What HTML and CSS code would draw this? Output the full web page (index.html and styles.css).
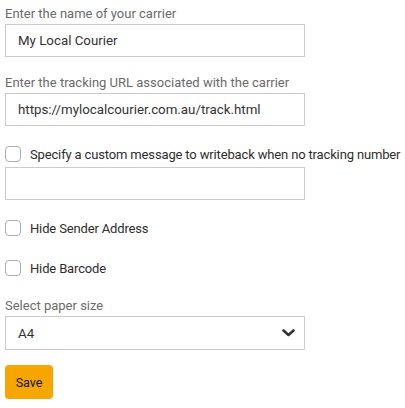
FILE: index.html
```html
<!DOCTYPE html>
<html>
<head>
<meta charset="utf-8">
<link rel="stylesheet" href="styles.css">
</head>
<body>
<form class="form">
  <div class="field">
    <label class="label">Enter the name of your carrier</label>
    <input class="text-input" type="text" value="My Local Courier">
  </div>
  <div class="field">
    <label class="label">Enter the tracking URL associated with the carrier</label>
    <input class="text-input" type="text" value="https://mylocalcourier.com.au/track.html">
  </div>
  <label class="check check-first"><span class="box"></span><span>Specify a custom message to writeback when no tracking number</span></label>
  <input class="text-input msg-input" type="text" value="">
  <label class="check check-sender"><span class="box"></span><span>Hide Sender Address</span></label>
  <label class="check check-barcode"><span class="box"></span><span>Hide Barcode</span></label>
  <div class="field paper">
    <label class="label">Select paper size</label>
    <div class="select">
      <span>A4</span>
      <svg class="chev" width="13" height="8" viewBox="0 0 13 8"><path d="M1.5 1.5 L6.5 6 L11.5 1.5" fill="none" stroke="#333" stroke-width="2.6" stroke-linecap="round" stroke-linejoin="round"/></svg>
    </div>
  </div>
  <button class="save" type="button">Save</button>
</form>
</body>
</html>
```
FILE: styles.css
```css
html, body { margin: 0; padding: 0; background: #fff; }
body { font-family: Roboto, "Noto Sans", sans-serif; font-size: 13px; }
.form { display: flex; flex-direction: column; align-items: flex-start; padding: 4px 5px; width: 300px; }
.field { display: flex; flex-direction: column; width: 300px; margin-bottom: 16px; }
.label { display: block; line-height: 20px; color: #6b6b6b; }
.text-input {
  box-sizing: border-box; width: 300px; height: 33px; margin: 0;
  border: 1px solid #ccc; border-radius: 0; padding: 0 12px;
  font-family: inherit; font-size: 13.3px; color: #333; background: #fff; outline: none;
}
.check { display: flex; align-items: center; gap: 9px; height: 16px; color: #2e2e2e; white-space: nowrap; letter-spacing: -0.15px; }
.box { box-sizing: border-box; width: 16px; height: 16px; border: 1px solid #a9b0b8; border-radius: 4px; flex: none; }
.check-first { margin-top: 4px; }
.msg-input { margin-top: 5px; }
.check-sender { margin-top: 20px; }
.check-barcode { margin-top: 24px; }
.paper { margin-top: 20px; margin-bottom: 0; }
.select {
  box-sizing: border-box; width: 300px; height: 34px; border: 1px solid #ccc;
  display: flex; align-items: center; justify-content: space-between; padding: 0 9px 0 12px; color: #333; font-size: 13.3px;
}
.chev { display: block; }
.save {
  margin-top: 15px; width: 48px; height: 34px; border: none; border-radius: 4px;
  background: #f7a600; color: #111; font-family: inherit; font-size: 12.5px; padding: 0;
}
```
